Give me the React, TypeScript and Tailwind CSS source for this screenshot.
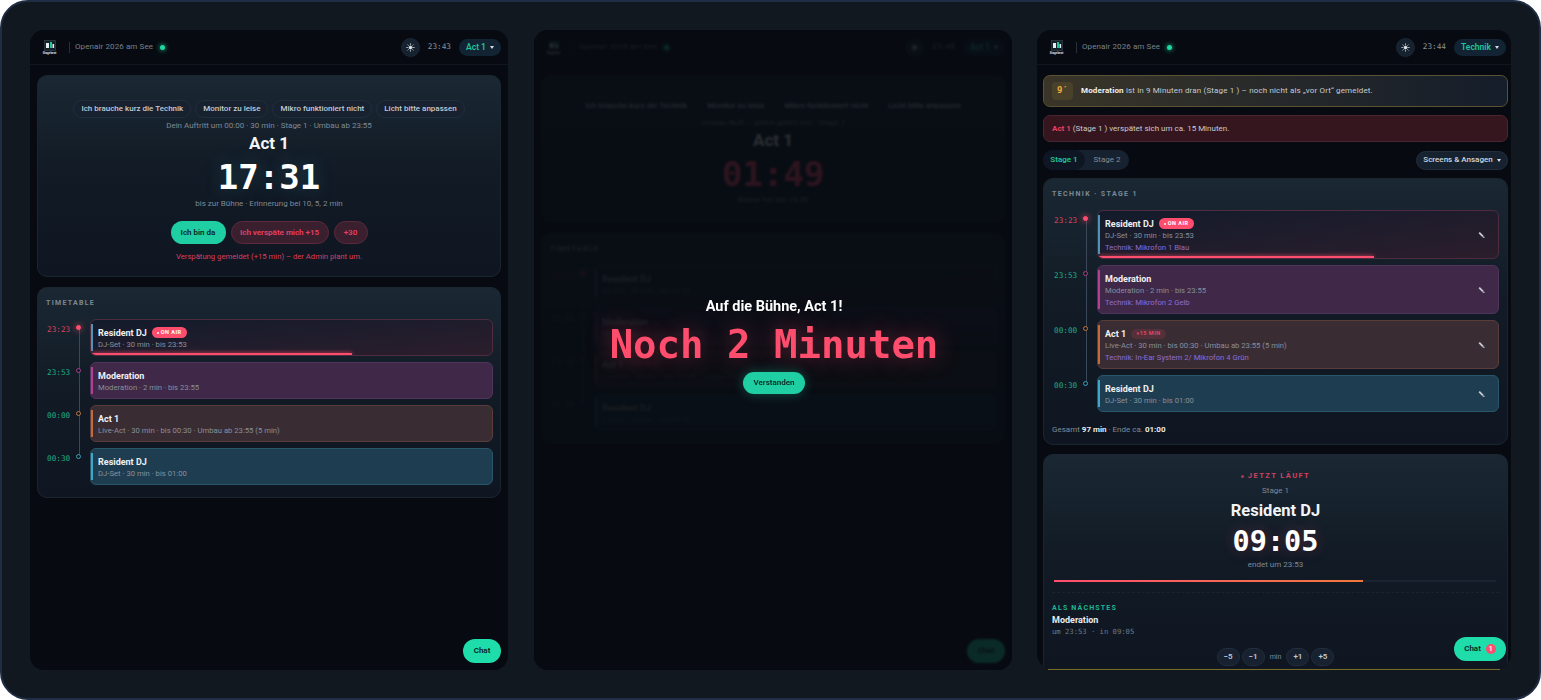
import React from 'react';
import { Sun } from 'lucide-react';

type Tone = 'air' | 'mod' | 'act' | 'dj';

interface RowData {
  time: string;
  tone: Tone;
  title: string;
  sub: string;
  tech?: string;
  badge?: 'air' | 'late';
  progress?: string;
}

const toneCard: Record<Tone, string> = {
  air: 'bg-gradient-to-br from-[#121b2b] to-[#2b1d2c] border-[#4f2b40]',
  mod: 'bg-[#3f2848] border-[#51345c]',
  act: 'bg-[#3a2c33] border-[#5a3d3a]',
  dj: 'bg-[#1f3d50] border-[#2a5669]',
};

const toneBar: Record<Tone, string> = {
  air: 'bg-[#4f93b5]',
  mod: 'bg-[#b53f92]',
  act: 'bg-[#c26b3c]',
  dj: 'bg-[#3fa8c9]',
};

const toneDot: Record<Tone, string> = {
  air: 'bg-[#ff4d6d] border-[#ff4d6d] shadow-[0_0_6px_#ff4d6d]',
  mod: 'bg-[#10171f] border-[#a8408b]',
  act: 'bg-[#10171f] border-[#bf7640]',
  dj: 'bg-[#10171f] border-[#3a9fbc]',
};

const Caret = () => (
  <svg width="4" height="3" viewBox="0 0 4 3">
    <path d="M0 0 H4 L2 3 Z" fill="#d5dde3" />
  </svg>
);

const Logo = () => (
  <div className="flex w-[15px] flex-col items-center">
    <svg width="12" height="11" viewBox="0 0 12 11">
      <rect x="0.5" y="0.5" width="11" height="10" fill="#14202a" stroke="#3b4a50" strokeWidth="0.6" />
      <rect x="2" y="3" width="3" height="5" fill="#e8edf0" />
      <rect x="6" y="2" width="2" height="6" fill="#1fc79a" />
      <rect x="8.5" y="4" width="1.6" height="4" fill="#e8edf0" />
    </svg>
    <span className="mt-[1px] text-[3px] leading-[3px] font-bold text-[#d8dee3]">Stagebeat</span>
  </div>
);

const Header = ({ time, role, roleW, pr }: { time: string; role: string; roleW: string; pr: string }) => (
  <div className={`flex h-[35px] shrink-0 items-center border-b border-[#10161d] pl-[12px] ${pr}`}>
    <Logo />
    <div className="mr-[5px] ml-[12px] h-[11px] w-px bg-[#263039]" />
    <span className="text-[8px] tracking-[0.1px] text-[#76818d]">Openair 2026 am See</span>
    <span className="ml-[7px] h-[5px] w-[5px] rounded-full bg-[#1fd8a4] shadow-[0_0_5px_#1fd8a4]" />
    <div className="ml-auto flex h-[19px] w-[19px] items-center justify-center rounded-full border border-[#1c2735] bg-[#172231]">
      <Sun size={9} color="#dfe5ea" fill="#dfe5ea" />
    </div>
    <span className="mx-[8px] font-['DejaVu_Sans_Mono',monospace] text-[7.7px] text-[#8a949e]">{time}</span>
    <div className={`flex h-[17px] items-center justify-center gap-[4px] rounded-full bg-[#122433] text-[8.5px] font-semibold text-[#1fc79a] ${roleW}`}>
      {role}
      <Caret />
    </div>
  </div>
);

const Pencil = () => (
  <svg width="7" height="7" viewBox="0 0 7 7" className="absolute top-1/2 right-[13px] -translate-y-1/2">
    <path d="M1.2 1.2 L4.9 4.9" stroke="#c9ced6" strokeWidth="1.8" fill="none" />
    <path d="M4.4 6 L6.6 6.6 L6 4.4 Z" fill="#c9ced6" />
  </svg>
);

const TimelineRow = ({ row, last, edit }: { row: RowData; last: boolean; edit?: boolean }) => (
  <div className="flex">
    <span className={`mt-[6px] w-[26px] shrink-0 font-['DejaVu_Sans_Mono',monospace] text-[7.7px] leading-[10px] ${row.tone === 'air' ? 'text-[#d9415f]' : 'text-[#1fa982]'}`}>
      {row.time}
    </span>
    <div className="relative w-[12px] shrink-0">
      {!last && <div className="absolute top-[8px] -bottom-[14px] left-[5.5px] w-px bg-[#3b4857]" />}
      <div className={`absolute top-[6px] left-[3px] box-content h-[3px] w-[3px] rounded-full border ${toneDot[row.tone]}`} />
    </div>
    <div className={`relative ml-[5px] min-w-0 flex-1 overflow-hidden rounded-[6px] border pt-[6px] pb-[4px] pl-[7px] ${toneCard[row.tone]}`}>
      <div className={`absolute top-[4px] bottom-[4px] left-0 w-[1.5px] ${toneBar[row.tone]}`} />
      <div className="flex h-[13px] items-center gap-[5px]">
        <span className="text-[9px] leading-[12px] font-bold text-[#eef1f4]">{row.title}</span>
        {row.badge === 'air' && (
          <span className="flex h-[11px] items-center gap-[2px] rounded-full bg-[#ff4d6d] px-[5px] text-[5.5px] font-bold tracking-[0.5px] text-white">
            <span className="h-[2px] w-[2px] rounded-full bg-white" />
            ON AIR
          </span>
        )}
        {row.badge === 'late' && (
          <span className="flex h-[10px] items-center rounded-full bg-[#54303a] px-[5px] text-[5.5px] font-bold tracking-[0.5px] text-[#e2465f]">
            +15 MIN
          </span>
        )}
      </div>
      <p className="text-[7.7px] leading-[12px] text-[#86909c]">{row.sub}</p>
      {row.tech && <p className="text-[7.7px] leading-[12px] text-[#8d6dd2]">{row.tech}</p>}
      {row.progress && (
        <div className={`absolute bottom-0 left-0 h-[2px] bg-[#ff4d6d] shadow-[0_0_4px_#ff4d6d] ${row.progress}`} />
      )}
      {edit && <Pencil />}
    </div>
  </div>
);

const cardBase = 'rounded-[10px] border border-[#1b2530] bg-gradient-to-b from-[#1a2833] via-[#111a25] to-[#0f1621]';

const chips = ['Ich brauche kurz die Technik', 'Monitor zu leise', 'Mikro funktioniert nicht', 'Licht bitte anpassen'];

const Chips = () => (
  <div className="flex justify-center gap-[4px]">
    {chips.map((c) => (
      <span key={c} className="flex h-[18px] items-center rounded-full border border-[#222e3c] bg-[#172130] px-[7px] text-[8px] font-medium whitespace-nowrap text-[#c3cad2]">
        {c}
      </span>
    ))}
  </div>
);

const rowsOne: RowData[] = [
  { time: '23:23', tone: 'air', title: 'Resident DJ', sub: 'DJ-Set · 30 min · bis 23:53', badge: 'air', progress: 'w-[65%]' },
  { time: '23:53', tone: 'mod', title: 'Moderation', sub: 'Moderation · 2 min · bis 23:55' },
  { time: '00:00', tone: 'act', title: 'Act 1', sub: 'Live-Act · 30 min · bis 00:30 · Umbau ab 23:55 (5 min)' },
  { time: '00:30', tone: 'dj', title: 'Resident DJ', sub: 'DJ-Set · 30 min · bis 01:00' },
];

const rowsTwo: RowData[] = [
  { time: '23:23', tone: 'air', title: 'Resident DJ', sub: 'DJ-Set · 30 min · bis 23:53' },
  { time: '23:43', tone: 'mod', title: 'Moderation', sub: 'Moderation · 2 min · bis 23:45' },
  { time: '23:50', tone: 'act', title: 'Act 1', sub: 'Live-Act · 30 min · bis 00:20 · Umbau ab 23:45 (5 min)', badge: 'late' },
  { time: '00:20', tone: 'dj', title: 'Resident DJ', sub: 'DJ-Set · 30 min · bis 00:50' },
];

const rowsTech: RowData[] = [
  { time: '23:23', tone: 'air', title: 'Resident DJ', sub: 'DJ-Set · 30 min · bis 23:53', tech: 'Technik: Mikrofon 1 Blau', badge: 'air', progress: 'w-[69%]' },
  { time: '23:53', tone: 'mod', title: 'Moderation', sub: 'Moderation · 2 min · bis 23:55', tech: 'Technik: Mikrofon 2 Gelb' },
  { time: '00:00', tone: 'act', title: 'Act 1', sub: 'Live-Act · 30 min · bis 00:30 · Umbau ab 23:55 (5 min)', tech: 'Technik: In-Ear System 2/ Mikrofon 4 Grün', badge: 'late' },
  { time: '00:30', tone: 'dj', title: 'Resident DJ', sub: 'DJ-Set · 30 min · bis 01:00' },
];

const Timetable = ({ rows, dim }: { rows: RowData[]; dim?: boolean }) => (
  <div className={`${cardBase} pt-[10px] pr-[7px] pb-[12px] pl-[8px]`}>
    <h3 className="text-[7px] leading-[10px] font-bold tracking-[1.3px] text-[#7c8894]">TIMETABLE</h3>
    <div className={`mt-[11px] flex flex-col gap-[6px] pl-[1px] ${dim ? 'opacity-45' : ''}`}>
      {rows.map((r, i) => (
        <TimelineRow key={r.time} row={r} last={i === rows.length - 1} />
      ))}
    </div>
  </div>
);

const ChatButton = ({ badge }: { badge?: boolean }) => (
  <div className={`absolute bottom-[7px] flex h-[24px] items-center justify-center gap-[5px] rounded-full bg-[#1fdcab] text-[8px] font-semibold text-[#07261f] ${badge ? 'right-[5px] w-[52px]' : 'right-[7px] w-[38px]'}`}>
    Chat
    {badge && (
      <span className="flex h-[10px] w-[10px] items-center justify-center rounded-full bg-[#ff4d6d] text-[7px] text-white">1</span>
    )}
  </div>
);

const PanelOne = () => (
  <div className="relative flex h-[640px] w-[478px] shrink-0 flex-col rounded-[14px] bg-[#070b11]">
    <Header time="23:43" role="Act 1" roleW="w-[42px]" pr="pr-[7px]" />
    <div className="flex flex-col gap-[10px] px-[7px] pt-[10px]">
      <div className={`${cardBase} flex h-[202px] flex-col items-center pt-[24px]`}>
        <Chips />
        <p className="mt-[2px] text-[8px] leading-[11px] text-[#7f8a96]">Dein Auftritt um 00:00 · 30 min · Stage 1 · Umbau ab 23:55</p>
        <h2 className="mt-[2px] text-[17px] leading-[20px] font-bold text-[#f2f4f6]">Act 1</h2>
        <div className="mt-[4px] font-['DejaVu_Sans_Mono',monospace] text-[34px] leading-[40px] font-bold text-white [text-shadow:0_0_18px_rgba(90,200,220,0.25)]">17:31</div>
        <p className="mt-[1px] text-[8px] leading-[11px] text-[#7f8a96]">bis zur Bühne · Erinnerung bei 10, 5, 2 min</p>
        <div className="mt-[12px] flex gap-[5px]">
          <span className="flex h-[23px] w-[55px] items-center justify-center rounded-full bg-[#1fcfa3] text-[8px] font-semibold text-[#07261f]">Ich bin da</span>
          <span className="flex h-[23px] w-[98px] items-center justify-center rounded-full border border-[#5c2a3c] bg-[#3a1f2f] text-[8px] font-semibold text-[#ea4062]">Ich verspäte mich +15</span>
          <span className="flex h-[23px] w-[34px] items-center justify-center rounded-full border border-[#5c2a3c] bg-[#3a1f2f] text-[8px] font-semibold text-[#ea4062]">+30</span>
        </div>
        <p className="mt-[7px] text-[7.7px] leading-[11px] text-[#d93f5e]">Verspätung gemeldet (+15 min) – der Admin plant um.</p>
      </div>
      <Timetable rows={rowsOne} />
    </div>
    <ChatButton />
  </div>
);

const PanelTwo = () => (
  <div className="relative flex h-[640px] w-[478px] shrink-0 flex-col overflow-hidden rounded-[14px] bg-[#070b11]">
    <Header time="23:49" role="Act 1" roleW="w-[42px]" pr="pr-[7px]" />
    <div className="flex flex-col gap-[10px] px-[7px] pt-[10px]">
      <div className={`${cardBase} flex h-[148px] flex-col items-center pt-[21px]`}>
        <Chips />
        <p className="mt-[2px] text-[8px] leading-[11px] text-[#7f8a96]">Umbau läuft – gleich geht's los! · Stage 1</p>
        <h2 className="mt-[2px] text-[17px] leading-[20px] font-bold text-[#f2f4f6]">Act 1</h2>
        <div className="mt-[4px] font-['DejaVu_Sans_Mono',monospace] text-[34px] leading-[40px] font-bold text-[#ff4d6d]">01:49</div>
        <p className="text-[8px] leading-[11px] text-[#7f8a96]">Bühne frei um 23:50</p>
      </div>
      <Timetable rows={rowsTwo} dim />
    </div>
    <ChatButton />
    <div className="absolute inset-0 flex flex-col items-center bg-[#070b11]/85 pt-[267px] pl-[2px] backdrop-blur-[1px]">
      <h2 className="text-[14.5px] leading-[20px] font-bold text-white">Auf die Bühne, Act 1!</h2>
      <div className="mt-[5px] font-['DejaVu_Sans_Mono',monospace] text-[39px] leading-[46px] font-bold text-[#ff4d6d] [text-shadow:0_0_24px_rgba(255,77,109,0.45)]">Noch 2 Minuten</div>
      <span className="mt-[4px] flex h-[22px] w-[62px] items-center justify-center rounded-full bg-[#1fcfa3] text-[8px] font-semibold text-[#07261f] shadow-[0_0_12px_rgba(31,207,163,0.35)]">Verstanden</span>
    </div>
  </div>
);

const nudges = ['−5', '−1', 'min', '+1', '+5'];

const NowCard = () => (
  <div className={`${cardBase} flex h-[216px] flex-col overflow-hidden rounded-b-none px-[8px] pt-[16px]`}>
    <div className="flex flex-col items-center">
      <span className="flex items-center gap-[4px] text-[7.5px] leading-[10px] font-bold tracking-[1.4px] text-[#d2405f]">
        <span className="h-[3px] w-[3px] rounded-full bg-[#a33a52]" />
        JETZT LÄUFT
      </span>
      <span className="mt-[4px] text-[8px] leading-[11px] text-[#7f8a96]">Stage 1</span>
      <h2 className="mt-[5px] text-[16.5px] leading-[20px] font-bold text-[#f2f4f6]">Resident DJ</h2>
      <div className="mt-[4px] font-['DejaVu_Sans_Mono',monospace] text-[28.5px] leading-[34px] font-bold text-white [text-shadow:0_0_14px_rgba(255,77,109,0.25)]">09:05</div>
      <span className="text-[8px] leading-[11px] text-[#7f8a96]">endet um 23:53</span>
    </div>
    <div className="mt-[10px] mr-[3px] ml-[2px] h-[2px] bg-[#1a2430]">
      <div className="h-full w-[70%] bg-gradient-to-r from-[#ff4d6d] to-[#f0783c]" />
    </div>
    <div className="mt-[10px] border-t border-dashed border-[#1a2430]" />
    <p className="mt-[10px] text-[7px] leading-[10px] font-bold tracking-[1.2px] text-[#1fb78f]">ALS NÄCHSTES</p>
    <p className="mt-[1px] text-[9px] leading-[13px] font-bold text-[#e8ecef]">Moderation</p>
    <p className="font-['DejaVu_Sans_Mono',monospace] text-[7.2px] leading-[10px] text-[#6f7a86]">um 23:53 · in 09:05</p>
    <div className="mt-[11px] flex items-center justify-center gap-[2px]">
      {nudges.map((n) =>
        n === 'min' ? (
          <span key={n} className="mx-[3px] text-[7px] text-[#7f8a96]">min</span>
        ) : (
          <span key={n} className="flex h-[18px] w-[23px] items-center justify-center rounded-full border border-[#222e3c] bg-[#172130] text-[8px] font-semibold text-[#c3cad2]">{n}</span>
        ),
      )}
    </div>
  </div>
);

const PanelThree = () => (
  <div className="relative -ml-[1px] h-[638px] w-[474px] shrink-0 rounded-[14px] bg-[#070b11]">
    <div className="flex h-full flex-col overflow-hidden rounded-[14px]">
      <Header time="23:44" role="Technik" roleW="w-[52px]" pr="pr-[5px]" />
      <div className="flex flex-col pt-[10px] pr-[3px] pl-[6px]">
        <div className="flex h-[32px] items-center rounded-[7px] border border-[#5b5233] bg-gradient-to-r from-[#3a3528] to-[#141d2a] pl-[8px] text-[8px] text-[#c5cbd2]">
          <span className="mr-[8px] flex h-[18px] w-[21px] items-center justify-center rounded-[4px] bg-[#4a412a] font-['DejaVu_Sans_Mono',monospace] text-[9px] font-bold text-[#eda93d]">9′</span>
          <span className="tracking-[0.15px]"><b className="font-bold text-[#eef1f4]">Moderation</b> ist in 9 Minuten dran (Stage 1 ) – noch nicht als „vor Ort“ gemeldet.</span>
        </div>
        <div className="mt-[8px] flex h-[27px] items-center rounded-[7px] border border-[#4a2431] bg-[#35161f] pl-[8px] text-[8px] text-[#c5cbd2]">
          <b className="mr-[2px] font-bold text-[#ea4062]">Act 1</b> (Stage 1 ) verspätet sich um ca. 15 Minuten.
        </div>
        <div className="mt-[8px] flex items-center justify-between">
          <div className="flex h-[20px] w-[86px] items-center rounded-full bg-[#172231] text-[8px]">
            <span className="flex h-full w-[42px] items-center justify-center rounded-full bg-[#0d1622] font-semibold text-[#1fc79a]">Stage 1</span>
            <span className="flex-1 text-center text-[#7f8a96]">Stage 2</span>
          </div>
          <span className="flex h-[19px] w-[92px] items-center justify-center gap-[4px] rounded-full border border-[#222e3c] bg-[#172231] text-[8px] font-medium text-[#d0d6dc]">
            Screens &amp; Ansagen
            <Caret />
          </span>
        </div>
        <div className={`${cardBase} mt-[8px] h-[267px] px-[8px] pt-[10px]`}>
          <h3 className="text-[7px] leading-[10px] font-bold tracking-[1.4px] text-[#7c8894]">TECHNIK · STAGE 1</h3>
          <div className="mt-[11px] flex flex-col gap-[6px] pl-[2px]">
            {rowsTech.map((r, i) => (
              <TimelineRow key={r.time} row={r} last={i === rowsTech.length - 1} edit />
            ))}
          </div>
          <p className="mt-[12px] text-[8px] leading-[11px] text-[#7f8a96]">
            Gesamt <b className="font-bold text-[#e8ecef]">97 min</b> · Ende ca. <b className="font-bold text-[#e8ecef]">01:00</b>
          </p>
        </div>
        <div className="mt-[9px]">
          <NowCard />
        </div>
      </div>
    </div>
    <div className="absolute -bottom-[2px] left-[11px] h-px w-[452px] bg-[#7a6a2a]" />
    <ChatButton badge />
  </div>
);

export default function App() {
  return (
    <div className="h-[700px] w-[1541px] overflow-hidden bg-white font-['Roboto',sans-serif]">
      <div className="flex h-full gap-[26px] rounded-[28px] border-2 border-[#1f2d45] bg-[#111820] pt-[28px] pl-[28px]">
        <PanelOne />
        <PanelTwo />
        <PanelThree />
      </div>
    </div>
  );
}
